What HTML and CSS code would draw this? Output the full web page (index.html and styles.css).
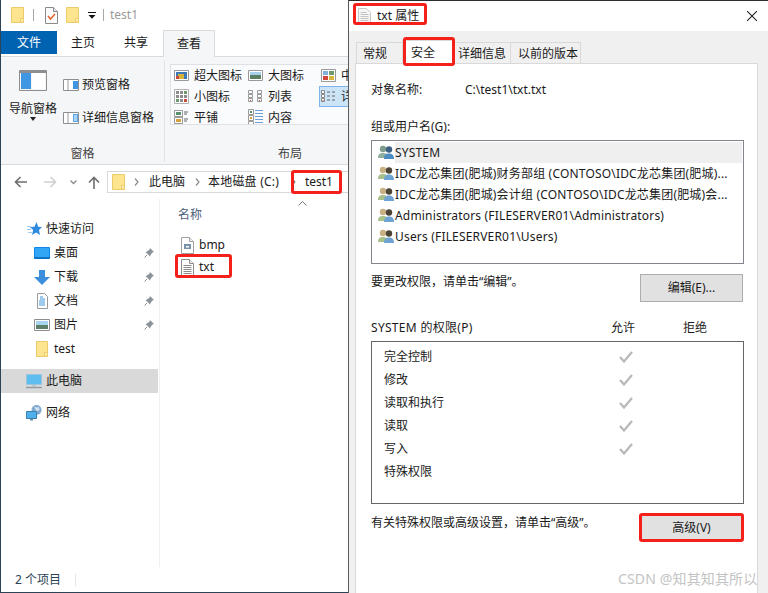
FILE: index.html
```html
<!DOCTYPE html>
<html lang="zh-CN">
<head>
<meta charset="utf-8">
<title>txt 属性</title>
<link rel="stylesheet" href="styles.css">
</head>
<body>
<div class="desk">
  <section class="explorer">
    <div class="qat">
      <svg class="q1" width="14" height="16" viewBox="0 0 14 16"><path d="M.5.500h12v15H.5z" fill="#fde58f" stroke="#eccb6a"/><path d="M9.500 15.500v-4h3" fill="#fff2c0" stroke="#eccb6a"/></svg>
      <span class="qsep"></span>
      <svg class="q2" width="13" height="17" viewBox="0 0 13 17"><path d="M.5.500h8l4 4v12H.5z" fill="#fbfbfb" stroke="#8a8a8a"/><path d="M8.500.5v4h4" fill="#e8e8e8" stroke="#8a8a8a"/><path d="M3 9l2.500 3 4.500-5" fill="none" stroke="#e8602c" stroke-width="1.500"/></svg>
      <svg class="q3" width="14" height="16" viewBox="0 0 14 16"><path d="M.5.500h12v15H.5z" fill="#fde58f" stroke="#eccb6a"/><path d="M9.500 15.500v-4h3" fill="#fff2c0" stroke="#eccb6a"/></svg>
      <svg class="q4" width="8" height="7" viewBox="0 0 8 7"><path d="M0 .5h8" stroke="#111"/><path d="M.5 3h7L4 6.800z" fill="#111"/></svg>
      <span class="qsep q5"></span>
      <span class="qtitle">test1</span>
    </div>
    <div class="tabs">
      <span class="tab-file">文件</span>
      <span class="tab tab-home">主页</span>
      <span class="tab tab-share">共享</span>
      <span class="tab-view">查看</span>
    </div>
    <div class="ribbon">
      <div class="group group-panes">
        <div class="panes-body">
          <div class="nav-pane">
            <svg width="28" height="21" viewBox="0 0 28 21"><path d="M.5.500h27v20H.5z" fill="#f5f5f5" stroke="#8e8e8e"/><path d="M1 1h26v2H1z" fill="#8e8e8e"/><path d="M2 3h10v16H2z" fill="#3f97e4"/><path d="M13 3h13v16H13z" fill="#fff"/></svg>
            <span class="nav-label">导航窗格</span>
            <span class="caret"></span>
          </div>
          <div class="pane-list">
            <div class="pane-item">
              <svg width="16" height="12" viewBox="0 0 16 12"><path d="M.5.500h15v11H.5z" fill="#fff" stroke="#8e8e8e"/><path d="M5 1v10" stroke="#9a9a9a"/><path d="M10 2h5v8h-5z" fill="#3f97e4"/></svg>
              <span>预览窗格</span>
            </div>
            <div class="pane-item">
              <svg width="16" height="12" viewBox="0 0 16 12"><path d="M.5.500h15v11H.5z" fill="#fff" stroke="#8e8e8e"/><path d="M5 1v10" stroke="#9a9a9a"/><path d="M10 2h5v8h-5z" fill="#58a6ea"/><path d="M11 4h3M11 6h3M11 8h3" stroke="#fff"/></svg>
              <span>详细信息窗格</span>
            </div>
          </div>
        </div>
        <div class="group-label">窗格</div>
      </div>
      <div class="group group-layout">
        <div class="gallery">
          <div class="gal-item">
            <svg width="15" height="11" viewBox="0 0 15 11"><path d="M.5.500h14v10H.5z" fill="#fff" stroke="#999"/><path d="M2 2h11v7H2z" fill="#3d78b8"/><path d="M4 4h6v5H4z" fill="#d8b43c"/><path d="M2 6h3v3H2z" fill="#c84a3a"/></svg>
            <span>超大图标</span>
          </div>
          <div class="gal-item">
            <svg width="15" height="11" viewBox="0 0 15 11"><path d="M.5.500h14v10H.5z" fill="#fff" stroke="#999"/><path d="M2 2h11v3H2z" fill="#a8d0ea"/><path d="M2 5h11v4H2z" fill="#5a7f63"/></svg>
            <span>大图标</span>
          </div>
          <div class="gal-item">
            <svg width="15" height="13" viewBox="0 0 15 13"><path d="M.5.500h14v12H.5z" fill="#fff" stroke="#999"/><path d="M2 2h5v4H2z" fill="#7fb2dd"/><path d="M8 2h5v4H8z" fill="#6d9a6d"/><path d="M2 7h5v4H2z" fill="#d0463a"/><path d="M8 7h5v4H8z" fill="#d8b43c"/></svg>
            <span>中图标</span>
          </div>
          <div class="gal-item">
            <svg width="15" height="15" viewBox="0 0 15 15"><path d="M.5.500h14v14H.5z" fill="#fff" stroke="#b0b0b0"/><path d="M2 2h3v3H2zM6 2h3v3H6zM2 6h3v3H2zM6 6h3v3H6zM6 10h3v3H6zM10 6h3v3h-3z" fill="#8d8d8d"/><path d="M10 2h3v3h-3zM2 10h3v3H2z" fill="#6d9a6d"/><path d="M10 10h3v3h-3z" fill="#c84a3a"/></svg>
            <span>小图标</span>
          </div>
          <div class="gal-item">
            <svg width="15" height="13" viewBox="0 0 15 13"><path d="M.5.500h4v3h-4zM.5 4.500h4v3h-4zM.5 8.500h4v3h-4zM9.500.5h4v3h-4zM9.500 4.500h4v3h-4zM9.500 8.500h4v3h-4z" fill="#fff" stroke="#999"/><path d="M2 10h1v1H2zM11 10h1v1h-1z" fill="#c84a3a"/></svg>
            <span>列表</span>
          </div>
          <div class="gal-item gal-sel">
            <svg width="15" height="13" viewBox="0 0 15 13"><path d="M.5.500h3v3h-3zM.5 4.500h3v3h-3zM.5 8.500h3v3h-3z" fill="#fff" stroke="#888"/><path d="M6 2h3M11 2h3M6 6h3M11 6h3M6 10h3M11 10h3" stroke="#666"/><path d="M1.500 10h1v1h-1z" fill="#c84a3a"/></svg>
            <span>详细信息</span>
          </div>
          <div class="gal-item">
            <svg width="15" height="15" viewBox="0 0 15 15"><path d="M.5.500h8v6h-8zM.5 7.500h8v6h-8z" fill="#fff" stroke="#999"/><path d="M2 2h5v3H2z" fill="#5a8f70"/><path d="M2 9h5v3H2z" fill="#d8a03c"/><path d="M10 2h4M10 4h3M10 9h4M10 11h3" stroke="#666"/></svg>
            <span>平铺</span>
          </div>
          <div class="gal-item">
            <svg width="15" height="17" viewBox="0 0 15 17"><path d="M.5.500h5v5h-5zM.5 6.500h5v5h-5zM.5 12.500h5v4h-5z" fill="#fff" stroke="#999"/><path d="M2 8h2v2H2z" fill="#d8a03c"/><path d="M2 2h2v2H2z" fill="#5a8f70"/><path d="M7 1.500h8M7 4.500h8M7 7.500h8M7 10.500h8M7 13.500h8" stroke="#6a9fd8"/></svg>
            <span>内容</span>
          </div>
          <div class="gal-item"></div>
        </div>
        <div class="group-label">布局</div>
      </div>
    </div>
    <div class="addr">
      <svg class="a-back" width="13" height="12" viewBox="0 0 13 12"><path d="M13 6H2M6.500 1L1.500 6l5 5" fill="none" stroke="#6e6e6e" stroke-width="1.600"/></svg>
      <svg class="a-fwd" width="13" height="12" viewBox="0 0 13 12"><path d="M0 6h11M6.500 1l5 5-5 5" fill="none" stroke="#d0d0d0" stroke-width="1.600"/></svg>
      <svg class="a-down" width="7" height="5" viewBox="0 0 7 5"><path d="M.5.500l3 3 3-3" fill="none" stroke="#8a8a8a" stroke-width="1.300"/></svg>
      <svg class="a-up" width="12" height="13" viewBox="0 0 12 13"><path d="M6 13V2M1 6.500l5-5 5 5" fill="none" stroke="#6e6e6e" stroke-width="1.600"/></svg>
      <div class="addr-box">
        <svg width="13" height="16" viewBox="0 0 13 16"><path d="M.5.500h12v15H.5z" fill="#fde58f" stroke="#eccb6a"/><path d="M9.500 15.500v-4h3" fill="#fff2c0" stroke="#eccb6a"/></svg>
        <svg class="crumb-sep c1" width="5" height="8" viewBox="0 0 5 8"><path d="M1 .5L4 4 1 7.500" fill="none" stroke="#8a8a8a" stroke-width="1.200"/></svg>
        <span class="crumb">此电脑</span>
        <svg class="crumb-sep c2" width="5" height="8" viewBox="0 0 5 8"><path d="M1 .5L4 4 1 7.500" fill="none" stroke="#8a8a8a" stroke-width="1.200"/></svg>
        <span class="crumb crumb-disk">本地磁盘 (C:)</span>
        <svg class="crumb-sep c3" width="5" height="8" viewBox="0 0 5 8"><path d="M1 .5L4 4 1 7.500" fill="none" stroke="#8a8a8a" stroke-width="1.200"/></svg>
        <span class="crumb">test1</span>
      </div>
    </div>
    <div class="main">
      <nav class="nav">
        <div class="nav-row nav-top">
          <svg width="15" height="14" viewBox="0 0 15 14"><path d="M9.500 0l1.700 4.700 3.800.3-3 3 1 5-3.800-2.600L5 13l1.200-5L3 5l4.500-.3z" fill="#2f8be0"/><path d="M0 4.500h4M0 7.500h4M1 10.500h4" stroke="#9ecbf0"/></svg>
          <span>快速访问</span>
        </div>
        <div class="nav-row nav-sub">
          <svg width="16" height="12" viewBox="0 0 16 12"><rect width="16" height="12" rx="1" fill="#0f87e8"/><rect x="1" y="1" width="14" height="9" fill="#31a6f5"/><path d="M0 11h16" stroke="#0b5fae"/></svg>
          <span>桌面</span>
          <svg class="pin" width="10" height="10" viewBox="0 0 10 10"><path d="M6 0l4 4-1.500.5L6.500 7 6 8.500 1.500 4 3 3.500 5.500 1.500z" fill="#8b939b"/><path d="M3 7L.5 9.500" stroke="#8b939b"/></svg>
        </div>
        <div class="nav-row nav-sub">
          <svg width="16" height="15" viewBox="0 0 16 15"><path d="M5 0h6v7h5l-8 8-8-8h5z" fill="#3c8fdc"/></svg>
          <span>下载</span>
          <svg class="pin" width="10" height="10" viewBox="0 0 10 10"><path d="M6 0l4 4-1.500.5L6.500 7 6 8.500 1.500 4 3 3.500 5.500 1.500z" fill="#8b939b"/><path d="M3 7L.5 9.500" stroke="#8b939b"/></svg>
        </div>
        <div class="nav-row nav-sub">
          <svg width="16" height="16" viewBox="0 0 16 16"><path d="M3.500.5h7l3 3v12h-10z" fill="#fff" stroke="#9a9a9a"/><path d="M6 4h3M6 6h5M5 8h6M5 10h6M5 12h6" stroke="#3f97d8"/></svg>
          <span>文档</span>
          <svg class="pin" width="10" height="10" viewBox="0 0 10 10"><path d="M6 0l4 4-1.500.5L6.500 7 6 8.500 1.500 4 3 3.500 5.500 1.500z" fill="#8b939b"/><path d="M3 7L.5 9.500" stroke="#8b939b"/></svg>
        </div>
        <div class="nav-row nav-sub">
          <svg width="16" height="12" viewBox="0 0 16 12"><path d="M.5.500h15v11H.5z" fill="#fff" stroke="#8e8e8e"/><path d="M2 2h12v4H2z" fill="#a8d4ee"/><path d="M2 6h12v4H2z" fill="#5d7f68"/></svg>
          <span>图片</span>
          <svg class="pin" width="10" height="10" viewBox="0 0 10 10"><path d="M6 0l4 4-1.500.5L6.500 7 6 8.500 1.500 4 3 3.500 5.500 1.500z" fill="#8b939b"/><path d="M3 7L.5 9.500" stroke="#8b939b"/></svg>
        </div>
        <div class="nav-row nav-sub">
          <svg width="16" height="16" viewBox="0 0 16 16"><path d="M2.500.5h11v15h-11z" fill="#fde58f" stroke="#eccb6a"/><path d="M10.500 15.500v-4h3" fill="#fff2c0" stroke="#eccb6a"/></svg>
          <span>test</span>
        </div>
        <div class="nav-row nav-pc">
          <svg width="16" height="15" viewBox="0 0 16 15"><path d="M.5.500h15v10H.5z" fill="#5fbdf0" stroke="#9cc4dd"/><path d="M6 11h4v1.500H6z" fill="#b8c4cc"/><path d="M0 13.500h16" stroke="#8f9ba3" stroke-width="1.400"/></svg>
          <span>此电脑</span>
        </div>
        <div class="nav-row nav-net">
          <svg width="16" height="16" viewBox="0 0 16 16"><circle cx="10.500" cy="5" r="5" fill="#7fa9d0"/><path d="M8 1.500c2 1 4 1 5 .5l.5 3-3 1.500z" fill="#cfe0ee"/><path d="M.5 6.500h10v7H.5z" fill="#4fb1ec" stroke="#3a7fae"/><path d="M4 14h3v1.500H4z" fill="#6f8ea3"/></svg>
          <span>网络</span>
        </div>
      </nav>
      <div class="list">
        <svg class="sort" width="9" height="5" viewBox="0 0 9 5"><path d="M.5 4.500l4-4 4 4" fill="none" stroke="#7a7a7a"/></svg>
        <div class="col-head">名称</div>
        <div class="file">
          <svg width="13" height="17" viewBox="0 0 13 17"><path d="M.5.500h8l4 4v12H.5z" fill="#fff" stroke="#a0a0a0"/><path d="M8.500.5v4h4" fill="#eee" stroke="#a0a0a0"/><path d="M3 7h7v5H3z" fill="#7a90a8"/><path d="M5 9h3v1.500H5z" fill="#fff"/></svg>
          <span>bmp</span>
        </div>
        <div class="file file-txt">
          <svg width="13" height="17" viewBox="0 0 13 17"><path d="M.5.500h8l4 4v12H.5z" fill="#fff" stroke="#8e8e8e"/><path d="M8.500.5v4h4" fill="#eee" stroke="#8e8e8e"/><path d="M2.500 6.500h8M2.500 8.500h8M2.500 10.500h8M2.500 12.500h8M2.500 14.500h8" stroke="#8a8a8a"/></svg>
          <span>txt</span>
        </div>
      </div>
    </div>
    <div class="status"><span class="status-text">2 个项目</span><span class="status-sep"></span></div>
  </section>

  <section class="dialog">
    <div class="dlg-title">
      <svg width="13" height="16" viewBox="0 0 13 16"><path d="M.5.500h8l4 4v11H.5z" fill="#f6f6f6" stroke="#c8c8c8"/><path d="M2.500 4.500h6M2.500 6.500h8M2.500 8.500h8M2.500 10.500h8M2.500 12.500h8" stroke="#c4c4c4"/></svg>
      <span class="dlg-name">txt 属性</span>
      <svg class="close" width="10" height="10" viewBox="0 0 10 10"><path d="M0 0l10 10M10 0L0 10" stroke="#222" stroke-width="1.100"/></svg>
    </div>
    <div class="dlg-body">
      <div class="dlg-tabs">
        <span class="dtab dt-1">常规</span>
        <span class="dtab dt-on">安全</span>
        <span class="dtab dt-3">详细信息</span>
        <span class="dtab dt-4">以前的版本</span>
      </div>
      <div class="panel">
        <div class="obj"><span class="obj-label">对象名称:</span><span>C:\test1\txt.txt</span></div>
        <div class="lbl-users">组或用户名(G):</div>
        <div class="users">
          <div class="user user-sel">
            <svg width="16" height="15" viewBox="0 0 16 15"><circle cx="5" cy="4" r="3.200" fill="#7f9c8c"/><path d="M0 13c0-4 2-5 5-5s5 1 5 5z" fill="#8fae9e"/><circle cx="11" cy="4.500" r="3.200" fill="#3d5f82"/><path d="M6 14c0-4 2-5.500 5-5.500s5 1.500 5 5.500z" fill="#4b8cc4"/></svg>
            <span class="user-name">SYSTEM</span>
          </div>
          <div class="user">
            <svg width="16" height="15" viewBox="0 0 16 15"><circle cx="5" cy="4" r="3.200" fill="#c9b184"/><path d="M0 13c0-4 2-5 5-5s5 1 5 5z" fill="#a8c08c"/><circle cx="11" cy="4.500" r="3.200" fill="#4d4438"/><path d="M6 14c0-4 2-5.500 5-5.500s5 1.500 5 5.500z" fill="#6fa3d4"/></svg>
            <span class="user-name">IDC龙芯集团(肥城)财务部组 (CONTOSO\IDC龙芯集团(肥城)...</span>
          </div>
          <div class="user">
            <svg width="16" height="15" viewBox="0 0 16 15"><circle cx="5" cy="4" r="3.200" fill="#c9b184"/><path d="M0 13c0-4 2-5 5-5s5 1 5 5z" fill="#a8c08c"/><circle cx="11" cy="4.500" r="3.200" fill="#4d4438"/><path d="M6 14c0-4 2-5.500 5-5.500s5 1.500 5 5.500z" fill="#6fa3d4"/></svg>
            <span class="user-name">IDC龙芯集团(肥城)会计组 (CONTOSO\IDC龙芯集团(肥城)会...</span>
          </div>
          <div class="user">
            <svg width="16" height="15" viewBox="0 0 16 15"><circle cx="5" cy="4" r="3.200" fill="#c9b184"/><path d="M0 13c0-4 2-5 5-5s5 1 5 5z" fill="#a8c08c"/><circle cx="11" cy="4.500" r="3.200" fill="#4d4438"/><path d="M6 14c0-4 2-5.500 5-5.500s5 1.500 5 5.500z" fill="#6fa3d4"/></svg>
            <span class="user-name">Administrators (FILESERVER01\Administrators)</span>
          </div>
          <div class="user">
            <svg width="16" height="15" viewBox="0 0 16 15"><circle cx="5" cy="4" r="3.200" fill="#c9b184"/><path d="M0 13c0-4 2-5 5-5s5 1 5 5z" fill="#a8c08c"/><circle cx="11" cy="4.500" r="3.200" fill="#4d4438"/><path d="M6 14c0-4 2-5.500 5-5.500s5 1.500 5 5.500z" fill="#6fa3d4"/></svg>
            <span class="user-name">Users (FILESERVER01\Users)</span>
          </div>
        </div>
        <div class="edit-row">
          <span class="hint">要更改权限，请单击“编辑”。</span>
          <span class="btn">编辑(E)...</span>
        </div>
        <div class="perm-head">
          <span class="perm-title">SYSTEM 的权限(P)</span>
          <span class="perm-allow">允许</span>
          <span>拒绝</span>
        </div>
        <div class="perms">
          <div class="perm"><span class="perm-name">完全控制</span><svg width="14" height="12" viewBox="0 0 14 12"><path d="M1 6l4 4.500L13 1" fill="none" stroke="#b8b8b8" stroke-width="2.200"/></svg></div>
          <div class="perm"><span class="perm-name">修改</span><svg width="14" height="12" viewBox="0 0 14 12"><path d="M1 6l4 4.500L13 1" fill="none" stroke="#b8b8b8" stroke-width="2.200"/></svg></div>
          <div class="perm"><span class="perm-name">读取和执行</span><svg width="14" height="12" viewBox="0 0 14 12"><path d="M1 6l4 4.500L13 1" fill="none" stroke="#b8b8b8" stroke-width="2.200"/></svg></div>
          <div class="perm"><span class="perm-name">读取</span><svg width="14" height="12" viewBox="0 0 14 12"><path d="M1 6l4 4.500L13 1" fill="none" stroke="#b8b8b8" stroke-width="2.200"/></svg></div>
          <div class="perm"><span class="perm-name">写入</span><svg width="14" height="12" viewBox="0 0 14 12"><path d="M1 6l4 4.500L13 1" fill="none" stroke="#b8b8b8" stroke-width="2.200"/></svg></div>
          <div class="perm"><span class="perm-name">特殊权限</span></div>
        </div>
        <div class="adv-row">
          <span class="hint">有关特殊权限或高级设置，请单击“高级”。</span>
          <span class="btn btn-adv">高级(V)</span>
        </div>
      </div>
    </div>
  </section>

  <span class="mark mark-addr"></span>
  <span class="mark mark-txt"></span>
  <span class="mark mark-title"></span>
  <span class="mark mark-tab"></span>
  <span class="mark mark-btn"></span>
  <span class="watermark">CSDN @知其知其所以</span>
</div>
</body>
</html>
```
FILE: styles.css
```css
* { box-sizing: border-box; }
html, body { margin: 0; padding: 0; }
body {
  width: 768px;
  height: 593px;
  overflow: hidden;
  background: #fff;
  color: #1a1a1a;
  font: 12px/16px "Noto Sans", "Noto Sans CJK SC", sans-serif;
}
svg { display: block; flex: none; }
.desk { position: relative; display: flex; width: 768px; height: 593px; overflow: hidden; }

/* explorer */
.explorer {
  width: 348px;
  height: 593px;
  flex: none;
  display: flex;
  flex-direction: column;
  overflow: hidden;
  border-left: 1px solid #2c4356;
  border-bottom: 1px solid #2c4356;
  background: #fff;
}
.qat { height: 30px; flex: none; display: flex; align-items: center; padding-left: 10px; }
.qsep { width: 1px; height: 12px; background: #a8a8a8; margin-left: 8px; }
.q2 { margin-left: 11px; }
.q3 { margin-left: 8px; }
.q4 { margin-left: 8px; }
.q5 { margin-left: 7px; }
.qtitle { margin-left: 6px; color: #9a9a9a; }
.tabs { height: 27px; flex: none; display: flex; border-bottom: 1px solid #dadbdc; }
.tab-file { width: 56px; height: 23px; margin-top: 1px; padding-top: 1px; background: #0063b1; color: #fff; display: flex; align-items: center; justify-content: center; }
.tab { height: 24px; padding-top: 1px; display: flex; align-items: center; }
.tab-home { margin-left: 14px; }
.tab-share { margin-left: 29px; }
.tab-view { width: 52px; height: 27px; margin-left: 15px; background: #f5f6f7; border: 1px solid #dadbdc; border-bottom: 0; display: flex; align-items: center; justify-content: center; }
.ribbon { height: 108px; flex: none; display: flex; background: #f5f6f7; border-bottom: 1px solid #dadbdc; }
.group { display: flex; flex-direction: column; flex: none; }
.group-panes { width: 164px; margin: 3px 0 2px; border-right: 1px solid #e2e3e5; }
.panes-body { flex: 1; display: flex; padding: 10px 0 0 8px; }
.nav-pane { width: 48px; display: flex; flex-direction: column; align-items: center; }
.nav-label { margin-top: 10px; white-space: nowrap; }
.caret { width: 0; height: 0; border: 3px solid transparent; border-top: 4px solid #222; border-bottom: 0; }
.pane-list { margin-left: 6px; padding-top: 5px; display: flex; flex-direction: column; gap: 13px; }
.pane-item { height: 20px; display: flex; align-items: center; gap: 3px; white-space: nowrap; }
.group-label { height: 18px; flex: none; line-height: 20px; text-align: center; color: #444; }
.group-layout { width: 250px; margin: 3px 0 2px; }
.gallery {
  width: 183px;
  height: 61px;
  margin: 4px 0 0 5px;
  padding: 0 0 0 3px;
  flex: none;
  overflow: hidden;
  display: grid;
  grid-template-columns: 74px 73px 30px;
  grid-auto-rows: 21px;
  align-content: start;
  background: #fafbfd;
  border: 1px solid #dfe1e4;
}
.gal-item { display: flex; align-items: center; gap: 5px; height: 21px; min-width: 0; overflow: hidden; white-space: nowrap; }
.gal-sel { background: #cce4f7; border: 1px solid #7eb4ea; margin-left: -2px; padding-left: 1px; }
.group-layout .group-label { margin-top: auto; }
.addr { height: 34px; flex: none; display: flex; align-items: center; }
.a-back { margin-left: 13px; }
.a-fwd { margin-left: 17px; }
.a-down { margin-left: 13px; }
.a-up { margin-left: 11px; }
.addr-box {
  width: 260px;
  height: 22px;
  margin-left: 7px;
  flex: none;
  display: flex;
  align-items: center;
  padding-left: 4px;
  border: 1px solid #d9d9d9;
  white-space: nowrap;
}
.crumb-sep { margin: 0 10px 0 9px; }
.c2 { margin: 0 8px 0 10px; }
.c3 { margin: 0 9px 0 12px; }
.crumb-disk { letter-spacing: .2px; }
.main { flex: 1; min-height: 0; display: flex; }
.nav { width: 159px; flex: none; padding-top: 18px; border-right: 1px solid #f0f0f0; }
.nav-row { width: 157px; height: 24px; display: flex; align-items: center; }
.nav-top { padding-left: 26px; gap: 4px; }
.nav-sub { padding-left: 33px; gap: 4px; }
.pin { margin-left: auto; margin-right: 4px; }
.nav-pc { height: 24px; margin-top: 8px; padding-left: 25px; gap: 4px; background: #d9d9d9; }
.nav-net { margin-top: 8px; padding-left: 25px; gap: 4px; }
.list { flex: 1; position: relative; padding: 8px 0 0 18px; }
.sort { position: absolute; left: 138px; top: 2px; }
.col-head { height: 16px; color: #4c607a; }
.file { height: 22px; display: flex; align-items: center; gap: 5px; padding-left: 3px; }
.col-head + .file { margin-top: 11px; }
.file-txt span { margin-top: -1px; }
.status { height: 25px; flex: none; display: flex; align-items: center; padding-left: 14px; color: #2c4356; }
.status-sep { width: 1px; height: 12px; margin-left: 14px; background: #e6e6e6; }

/* dialog */
.dialog { flex: 1; display: flex; flex-direction: column; border-left: 1px solid #5a5a5a; border-top: 1px solid #2c2c2c; }
.dlg-title { height: 30px; flex: none; display: flex; align-items: center; padding: 0 11px 0 9px; background: #fff; }
.dlg-name { margin-left: 6px; }
.close { margin-left: auto; }
.dlg-body { flex: 1; display: flex; flex-direction: column; padding: 0 10px 0 6px; background: #f0f0f0; }
.dlg-tabs { height: 33px; flex: none; display: flex; align-items: flex-end; padding-left: 2px; }
.dtab { height: 22px; display: flex; align-items: center; padding: 0 4px; background: #f0f0f0; border: 1px solid #d9d9d9; border-bottom: 0; margin-left: -1px; white-space: nowrap; }
.dt-1 { width: 47px; padding-left: 6px; }
.dt-on { width: 52px; height: 24px; padding-left: 8px; background: #fff; }
.dt-3 { width: 58px; }
.dt-4 { width: 71px; padding-left: 7px; }
.panel { flex: 1; display: flex; flex-direction: column; padding: 18px 13px 0 15px; background: #fff; border: 1px solid #d9d9d9; border-bottom: 0; margin-top: -1px; }
.obj { height: 16px; display: flex; }
.obj-label { width: 94px; }
.lbl-users { margin-top: 21px; }
.users { height: 124px; margin-top: 5px; padding: 1px; border: 1px solid #82868c; }
.user { height: 21px; display: flex; align-items: center; padding-left: 5px; }
.user-name { margin-left: 1px; white-space: nowrap; letter-spacing: .18px; }
.user-sel .user-name { flex: 1; height: 21px; line-height: 21px; background: #efefef; }
.edit-row { height: 28px; margin-top: 10px; display: flex; justify-content: space-between; padding-right: 1px; }
.hint { white-space: nowrap; }
.btn { width: 103px; height: 28px; display: flex; align-items: center; justify-content: center; background: #e1e1e1; border: 1px solid #adadad; }
.perm-head { margin-top: 18px; display: flex; }
.perm-title { width: 240px; letter-spacing: .3px; }
.perm-allow { width: 72px; }
.perms { height: 163px; margin-top: 5px; padding-top: 3px; border: 1px solid #666; }
.perm { height: 23px; display: flex; align-items: center; padding-left: 12px; }
.perm-name { width: 235px; }
.adv-row { margin-top: 11px; display: flex; justify-content: space-between; padding-right: 1px; }
.btn-adv { height: 25px; }

/* annotations */
.mark { position: absolute; border: 3px solid #f5201a; border-radius: 3px; }
.mark-addr { left: 291px; top: 170px; width: 51px; height: 24px; }
.mark-txt { left: 175px; top: 254px; width: 57px; height: 24px; }
.mark-title { left: 353px; top: 3px; width: 74px; height: 22px; }
.mark-tab { left: 403px; top: 37px; width: 52px; height: 29px; }
.mark-btn { left: 639px; top: 513px; width: 105px; height: 29px; }
.watermark { position: absolute; left: 618px; top: 571px; font-size: 14px; letter-spacing: .15px; color: #c4c4c4; white-space: nowrap; }
```
